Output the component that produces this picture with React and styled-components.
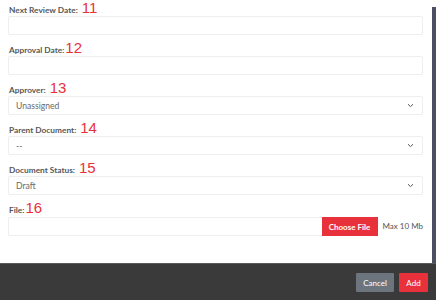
import React from "react";
import styled, { createGlobalStyle } from "styled-components";

const Global = createGlobalStyle`
  html, body { margin: 0; padding: 0; background: #fff; }
  body { font-family: "Lato", "Noto Sans", sans-serif; overflow: hidden; }
  #root { width: 436px; height: 300px; }
`;

const Page = styled.div`
  width: 436px;
  height: 300px;
  display: flex;
  flex-direction: column;
`;

const Body = styled.div`
  flex: 1;
  display: flex;
  min-height: 0;
`;

const Form = styled.div`
  flex: 1;
  padding: 0 9px 0 8px;
  display: flex;
  flex-direction: column;
`;

const ScrollTrack = styled.div`
  width: 4px;
  padding-top: 7px;
  display: flex;
`;

const Thumb = styled.div`
  flex: 1;
  background: #4b5163;
`;

const Field = styled.div`
  display: flex;
  flex-direction: column;
  margin-bottom: 5px;
`;

const LabelRow = styled.div`
  height: 16px;
  display: flex;
  align-items: baseline;
  padding-left: 1px;
`;

const Label = styled.span`
  font-size: 8.3px;
  font-weight: 700;
  color: #575757;
  line-height: 16px;
  margin-right: ${(p) => (p.$tight ? "1px" : "4px")};
`;

const Num = styled.span`
  display: inline-block;
  height: 16px;
  font-family: "Liberation Sans", "Open Sans", sans-serif;
  font-size: 15px;
  line-height: 16px;
  color: #e8313a;
`;

const Input = styled.div`
  height: 19px;
  box-sizing: border-box;
  border: 1px solid #eeeeee;
  border-radius: 2px;
  background: #fff;
`;

const Select = styled.div`
  height: 19px;
  box-sizing: border-box;
  border: 1px solid #eeeeee;
  border-radius: 2px;
  display: flex;
  align-items: center;
  justify-content: space-between;
  padding: 0 8px 0 7px;
  font-size: 8.6px;
  color: #6a6a6a;
`;

const FileRow = styled.div`
  display: flex;
  align-items: center;
  height: 20px;
`;

const FileInput = styled.div`
  flex: 1;
  height: 19px;
  box-sizing: border-box;
  border: 1px solid #eeeeee;
  border-right: none;
  border-radius: 2px 0 0 2px;
`;

const ChooseButton = styled.button`
  width: 56px;
  height: 19px;
  margin-top: 1px;
  border: none;
  background: #e8313a;
  color: #fff;
  font-family: "Lato", sans-serif;
  font-weight: 700;
  font-size: 8px;
  padding: 0;
`;

const MaxText = styled.span`
  margin-left: 5px;
  font-size: 8px;
  color: #555;
  white-space: nowrap;
`;

const Footer = styled.div`
  height: 37px;
  box-sizing: border-box;
  background: #3a3a3a;
  border-top: 1px solid #5a5a5a;
  display: flex;
  justify-content: flex-end;
  align-items: center;
  gap: 5px;
  padding: 0 8px 0 0;
`;

const FooterButton = styled.button`
  height: 19px;
  margin-top: 1px;
  border: none;
  border-radius: 1px;
  padding: 0;
  width: ${(p) => p.$w}px;
  background: ${(p) => (p.$primary ? "#e8313a" : "#6c757d")};
  color: #fff;
  font-family: "Lato", sans-serif;
  font-size: 8px;
`;

const Chevron = () => (
  <svg width="7" height="5" viewBox="0 0 7 5" fill="none">
    <path d="M1 1.2 L3.5 3.6 L6 1.2" stroke="#555" strokeWidth="1" />
  </svg>
);

const FieldLabel = ({ text, num, tight }) => (
  <LabelRow>
    <Label $tight={tight}>{text}</Label>
    <Num>{num}</Num>
  </LabelRow>
);

export default function App() {
  return (
    <Page>
      <Global />
      <Body>
        <Form>
          <Field>
            <FieldLabel text="Next Review Date:" num="11" />
            <Input />
          </Field>
          <Field>
            <FieldLabel text="Approval Date:" num="12" tight />
            <Input />
          </Field>
          <Field>
            <FieldLabel text="Approver:" num="13" />
            <Select>
              <span>Unassigned</span>
              <Chevron />
            </Select>
          </Field>
          <Field>
            <FieldLabel text="Parent Document:" num="14" />
            <Select>
              <span>--</span>
              <Chevron />
            </Select>
          </Field>
          <Field>
            <FieldLabel text="Document Status:" num="15" />
            <Select>
              <span>Draft</span>
              <Chevron />
            </Select>
          </Field>
          <Field>
            <FieldLabel text="File:" num="16" tight />
            <FileRow>
              <FileInput />
              <ChooseButton>Choose File</ChooseButton>
              <MaxText>Max 10 Mb</MaxText>
            </FileRow>
          </Field>
        </Form>
        <ScrollTrack>
          <Thumb />
        </ScrollTrack>
      </Body>
      <Footer>
        <FooterButton $w={38}>Cancel</FooterButton>
        <FooterButton $w={29} $primary>Add</FooterButton>
      </Footer>
    </Page>
  );
}
